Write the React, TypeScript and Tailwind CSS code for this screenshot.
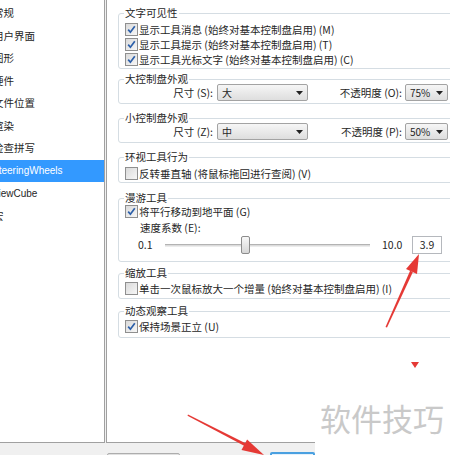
import React from "react";

const navItems = [
  "常规",
  "用户界面",
  "图形",
  "硬件",
  "文件位置",
  "渲染",
  "检查拼写",
  "SteeringWheels",
  "ViewCube",
  "宏",
];

function Check({ on }: { on?: boolean }) {
  return (
    <span className="flex h-[13px] w-[13px] shrink-0 items-center justify-center border border-[#8f8f8f] bg-linear-to-br from-[#dadada] to-[#f7f7f7]">
      {on && (
        <svg width="9" height="9" viewBox="0 0 9 9">
          <path d="M1.2 4.6 L3.4 7.2 L7.8 1.2" stroke="#2c5fa9" strokeWidth="1.7" fill="none" />
        </svg>
      )}
    </span>
  );
}

function CheckRow({ on, label, className = "" }: { on?: boolean; label: string; className?: string }) {
  return (
    <div className={`flex h-[15px] items-center gap-[1px] pl-[1px] ${className}`}>
      <Check on={on} />
      <span className="whitespace-nowrap">{label}</span>
    </div>
  );
}

function Select({ value, className = "" }: { value: string; className?: string }) {
  return (
    <div
      className={`flex h-[17px] items-center justify-between rounded-[2px] border border-[#a3a3a3] bg-linear-to-b from-[#f6f6f6] to-[#dedede] pl-[4px] pr-[4px] ${className}`}
    >
      <span className="text-[10px]">{value}</span>
      <svg width="7" height="4" viewBox="0 0 7 4">
        <path d="M0 0 H7 L3.5 4 Z" fill="#222" />
      </svg>
    </div>
  );
}

function Group({ title, className = "", children }: { title: string; className?: string; children: React.ReactNode }) {
  return (
    <fieldset className={`w-[345px] rounded-[3px] border border-[#d5dde3] px-[5px] ${className}`}>
      <legend className="px-[1px] leading-[14px]">{title}</legend>
      {children}
    </fieldset>
  );
}

export default function App() {
  return (
    <div
      className="relative h-[455px] w-[450px] overflow-hidden bg-[#f0f0f0] text-[10.5px] text-[#262626]"
      style={{ fontFamily: '"Noto Sans CJK SC", "Liberation Sans", sans-serif' }}
    >
      <div className="flex h-[443px] gap-[1px]">
        {/* left navigation */}
        <div className="h-full w-[105px] overflow-hidden border-r border-b border-[#a0a0a0] bg-white pt-[2px]">
          {navItems.map((item) => {
            const sel = item === "SteeringWheels";
            const latin = /^[A-Za-z]/.test(item);
            return (
              <div
                key={item}
                className={`flex h-[22.5px] items-center whitespace-nowrap ${sel ? "bg-[#3399ff] text-white" : ""}`}
              >
                <span
                  className={latin ? "ml-[-8px] text-[10px] font-['Liberation_Sans',sans-serif]" : "ml-[-7px]"}
                >
                  {item}
                </span>
              </div>
            );
          })}
        </div>

        {/* settings */}
        <div className="h-full flex-1 overflow-hidden border-l border-b border-[#a0a0a0] bg-white pt-[6px] pl-[11px]">
          <Group title="文字可见性" className="pb-[1px]">
            <div className="pt-[2px]">
              <CheckRow on label="显示工具消息 (始终对基本控制盘启用) (M)" />
              <CheckRow on label="显示工具提示 (始终对基本控制盘启用) (T)" />
              <CheckRow on label="显示工具光标文字 (始终对基本控制盘启用) (C)" />
            </div>
          </Group>

          <Group title="大控制盘外观" className="mt-[3px] pb-[2px]">
            <div className="mt-[-2px] flex items-center">
              <span className="w-[93px] pr-[4px] text-right whitespace-nowrap">尺寸 (S):</span>
              <Select value="大" className="w-[91px]" />
              <span className="w-[97px] pr-[3px] text-right whitespace-nowrap">不透明度 (O):</span>
              <Select value="75%" className="w-[43px]" />
            </div>
          </Group>

          <Group title="小控制盘外观" className="mt-[7px] pb-[2px]">
            <div className="mt-[-2px] flex items-center">
              <span className="w-[93px] pr-[4px] text-right whitespace-nowrap">尺寸 (Z):</span>
              <Select value="中" className="w-[91px]" />
              <span className="w-[97px] pr-[3px] text-right whitespace-nowrap">不透明度 (P):</span>
              <Select value="50%" className="w-[43px]" />
            </div>
          </Group>

          <Group title="环视工具行为" className="mt-[7px] pb-[1px]">
            <CheckRow label="反转垂直轴 (将鼠标拖回进行查阅) (V)" className="mt-[2px]" />
          </Group>

          <Group title="漫游工具" className="mt-[8px] pb-[7px]">
            <CheckRow on label="将平行移动到地平面 (G)" className="mt-[-1px]" />
            <div className="flex h-[17px] items-center pl-[16px]">速度系数 (E):</div>
            <div className="flex h-[18px] items-center">
              <span className="ml-[14px] w-[27px]">0.1</span>
              <div className="relative h-[18px] w-[205px]">
                <div className="mt-[8px] h-[3px] border-t border-b border-t-[#b3b3b3] border-b-[#ececec] bg-[#dcdcdc]" />
                <div className="absolute top-0 left-[76px] h-[18px] w-[9px] rounded-[2px] border border-[#8c8c8c] bg-linear-to-b from-[#f8f8f8] to-[#d6d6d6]" />
              </div>
              <span className="ml-[12px] w-[20px]">10.0</span>
              <div className="ml-[10px] flex h-[18px] w-[30px] items-center justify-center border border-[#b5b8bd] bg-white">
                3.9
              </div>
            </div>
          </Group>

          <Group title="缩放工具" className="mt-[4px] pb-[2px]">
            <CheckRow label="单击一次鼠标放大一个增量 (始终对基本控制盘启用) (I)" className="mt-[1px]" />
          </Group>

          <Group title="动态观察工具" className="mt-[5px] pb-[3px]">
            <CheckRow on label="保持场景正立 (U)" className="mt-[1px]" />
          </Group>
        </div>
      </div>

      {/* bottom button bar */}
      <div className="flex h-[12px]">
        <div className="mt-[10px] ml-[107px] h-[10px] w-[73px] rounded-[2px] border border-[#adadad] bg-[#e1e1e1]" />
        <div className="mt-[9px] ml-[90px] h-[10px] w-[45px] rounded-[2px] border-2 border-[#4aa0e0] bg-[#e5f1fb]" />
      </div>

      {/* watermark */}
      <div className="absolute top-[398px] left-[315px] h-[57px] w-[135px] bg-white pt-[4px] pl-[5px]">
        <span className="text-[31px] leading-[32px] whitespace-nowrap text-[#c9c9c9]">软件技巧</span>
      </div>

      {/* annotation arrows */}
      <svg className="pointer-events-none absolute inset-0" width="450" height="455" viewBox="0 0 450 455">
        <polygon points="385.5,327 410.1,270.7 412.9,272 387,327.6" fill="#e53935" />
        <polygon points="419,254 417,274 406,269" fill="#e53935" />
        <polygon points="411,362 419,362 415,368" fill="#e53935" />
        <polygon points="188,414.5 246,443.5 244.6,446.1 187.5,415.8" fill="#e53935" />
        <polygon points="264,455 241.5,450 247.1,439.4" fill="#e53935" />
      </svg>
    </div>
  );
}
